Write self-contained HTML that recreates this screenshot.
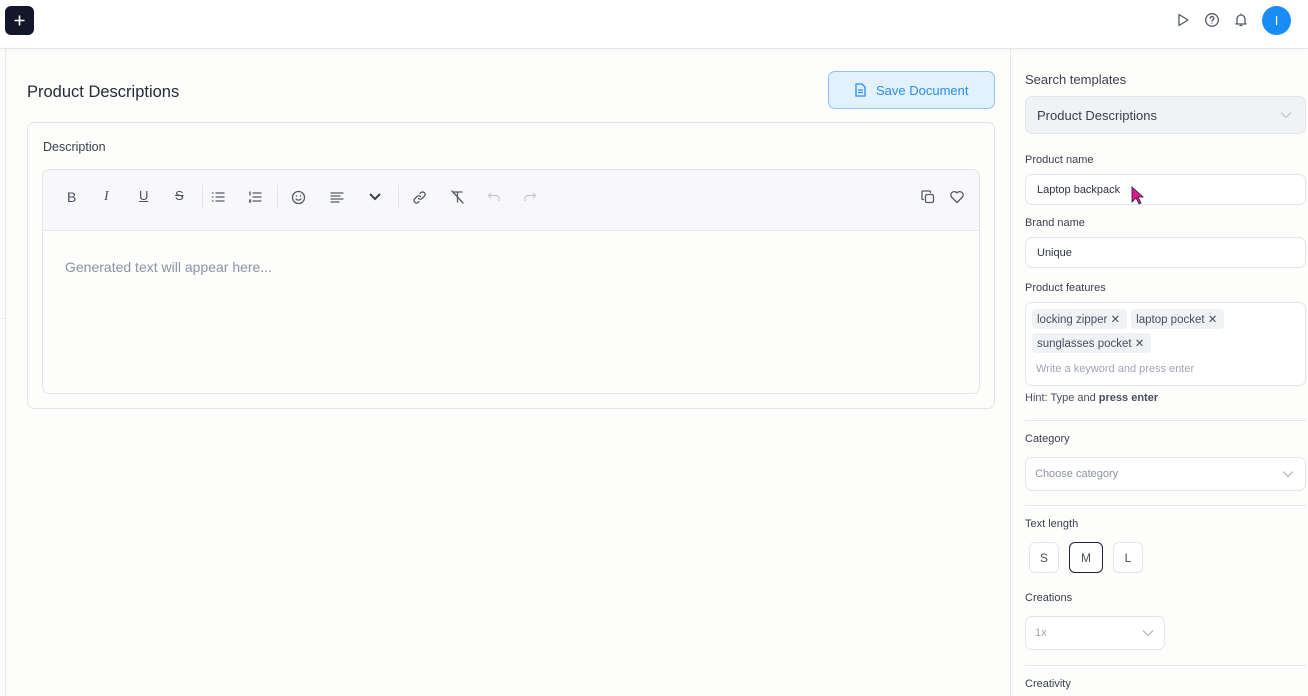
<!DOCTYPE html>
<html><head><meta charset="utf-8"><style>
*{box-sizing:border-box;margin:0;padding:0}
body{width:1308px;height:696px;overflow:hidden;background:#fdfdfc;font-family:"Liberation Sans",sans-serif;color:#2d3240;position:relative}
.a{position:absolute}
.lbl{position:absolute;left:1025px;font-size:11px;color:#3a3f4b;margin-top:1px}
.inp{position:absolute;left:1025px;width:281px;border:1px solid #e3e5ec;border-radius:7px;background:#fff;font-size:11px;color:#2d3240;padding-left:11px;display:flex;align-items:center}
.tag{display:inline-block;background:#f1f2f6;border-radius:4px;font-size:11.5px;color:#4a4f5c;padding:3px 7px 3px 5px;margin:0 4px 4px 0}
.hr{position:absolute;left:1025px;width:281px;height:1px;background:#e6e7ee}
.sz{position:absolute;top:542px;width:30px;height:31px;border:1px solid #e3e5ec;border-radius:6px;font-size:12px;color:#4a4f5c;display:flex;align-items:center;justify-content:center;background:#fff}
svg{position:absolute}
.ic{stroke:#555a66;fill:none;stroke-width:1.3;stroke-linecap:round;stroke-linejoin:round}
</style></head><body>
<div class="a" style="left:0;top:0;width:1308px;height:49px;background:#fff;border-bottom:1px solid #e6e7ee;box-shadow:0 1px 2px rgba(0,0,0,.04)"></div>
<div class="a" style="left:5px;top:6px;width:29px;height:29px;background:#141629;border-radius:6px"></div>
<svg style="left:13px;top:14px" width="13" height="13" viewBox="0 0 13 13"><path d="M6.5 1.5v10M1.5 6.5h10" stroke="#fff" stroke-width="1.6"/></svg>
<svg style="left:1175px;top:12px" width="16" height="16" viewBox="0 0 16 16"><path class="ic" d="M4 2.5v11l9-5.5z"/></svg>
<svg style="left:1204px;top:12px" width="16" height="16" viewBox="0 0 16 16"><circle class="ic" cx="8" cy="8" r="6.3"/><path class="ic" d="M6.2 6.3a1.8 1.8 0 1 1 2.4 1.7c-.5.2-.6.6-.6 1.2"/><circle cx="8" cy="11.3" r=".6" fill="#555a66"/></svg>
<svg style="left:1233px;top:12px" width="16" height="16" viewBox="0 0 16 16"><path class="ic" d="M4 11V7a4 4 0 0 1 8 0v4l1 1H3zM7 13.5h2M8 2v1"/></svg>
<div class="a" style="left:1262px;top:6px;width:29px;height:29px;border-radius:50%;background:#1a8cf5;color:#fff;font-size:13px;line-height:29px;text-align:center">I</div>
<div class="a" style="left:5px;top:49px;width:1px;height:647px;background:#e8e9f0"></div>
<div class="a" style="left:0;top:318px;width:5px;height:1px;background:#e8e9f0"></div>
<div class="a" style="left:1010px;top:49px;width:1px;height:647px;background:#e6e7ee"></div>
<div class="a" style="left:27px;top:83px;font-size:16.5px;color:#262a36">Product Descriptions</div>
<div class="a" style="left:828px;top:71px;width:167px;height:38px;border:1px solid #8cc6f8;border-radius:7px;background:#e3f1fd;color:#2a8ef0;font-size:13px;display:flex;align-items:center;padding-left:47px">Save Document</div>
<svg style="left:854px;top:83px" width="13" height="14" viewBox="0 0 13 14"><path d="M2 1h6l3 3v9H2z M4 7h5M4 9.5h5" stroke="#2a8ef0" stroke-width="1.3" fill="none"/></svg>
<div class="a" style="left:27px;top:122px;width:968px;height:287px;border:1px solid #e3e5ec;border-radius:7px;background:#fdfdfc"></div>
<div class="a" style="left:43px;top:140px;font-size:12.5px;color:#3a3f4b">Description</div>
<div class="a" style="left:42px;top:169px;width:938px;height:225px;border:1px solid #e3e5ec;border-radius:7px;background:#fdfdfc;overflow:hidden">
<div style="height:61px;background:#f8f8fa;border-bottom:1px solid #e6e7ee"></div>
</div>
<div class="a" style="left:67px;top:189px;font-size:14px;color:#4a4f5c">B</div>
<div class="a" style="left:104px;top:189px;font-size:14px;color:#4a4f5c;font-style:italic;font-family:'Liberation Serif',serif">I</div>
<div class="a" style="left:139px;top:188px;font-size:13px;color:#4a4f5c;text-decoration:underline">U</div>
<div class="a" style="left:175px;top:188px;font-size:13px;color:#4a4f5c;text-decoration:line-through">S</div>
<div class="a" style="left:202px;top:185px;width:1px;height:24px;background:#e3e5ec"></div>
<svg style="left:211px;top:190px" width="14" height="14" viewBox="0 0 14 14"><path class="ic" d="M5 3h8M5 7h8M5 11h8M1.5 3h.5M1.5 7h.5M1.5 11h.5"/></svg>
<svg style="left:248px;top:190px" width="14" height="14" viewBox="0 0 14 14"><path class="ic" d="M5 3h8M5 7h8M5 11h8M2 2v3M1.5 10h1.2l-1.2 2h1.2"/></svg>
<div class="a" style="left:277px;top:185px;width:1px;height:24px;background:#e3e5ec"></div>
<svg style="left:291px;top:190px" width="15" height="15" viewBox="0 0 15 15"><circle class="ic" cx="7.5" cy="7.5" r="6"/><path class="ic" d="M5 9c1.3 1.5 3.7 1.5 5 0"/><circle cx="5.5" cy="6" r=".7" fill="#555a66"/><circle cx="9.5" cy="6" r=".7" fill="#555a66"/></svg>
<svg style="left:330px;top:191px" width="14" height="12" viewBox="0 0 14 12"><path class="ic" d="M1 2h12M1 5h9M1 8h12M1 11h8"/></svg>
<svg style="left:368px;top:192px" width="14" height="10" viewBox="0 0 14 10"><path d="M2 2l5 5 5-5" stroke="#3a3f4b" stroke-width="2" fill="none"/></svg>
<div class="a" style="left:398px;top:185px;width:1px;height:24px;background:#e3e5ec"></div>
<svg style="left:412px;top:190px" width="15" height="15" viewBox="0 0 15 15"><path class="ic" d="M6.5 8.5a2.5 2.5 0 0 0 3.5 0l2.5-2.5a2.5 2.5 0 0 0-3.5-3.5l-1 1M8.5 6.5a2.5 2.5 0 0 0-3.5 0L2.5 9a2.5 2.5 0 0 0 3.5 3.5l1-1"/></svg>
<svg style="left:450px;top:189px" width="15" height="16" viewBox="0 0 15 16"><path class="ic" d="M3 3h9M7.5 3v10M2 2l11 12"/></svg>
<svg style="left:487px;top:190px" width="14" height="14" viewBox="0 0 14 14"><path d="M4 3L1.5 5.5 4 8M1.5 5.5H9a3 3 0 0 1 3 3V11" stroke="#c4c7cf" stroke-width="1.2" fill="none"/></svg>
<svg style="left:523px;top:190px" width="14" height="14" viewBox="0 0 14 14"><path d="M10 3l2.5 2.5L10 8M12.5 5.5H5a3 3 0 0 0-3 3V11" stroke="#c4c7cf" stroke-width="1.2" fill="none"/></svg>
<svg style="left:920px;top:189px" width="16" height="16" viewBox="0 0 16 16"><rect class="ic" x="5.5" y="5.5" width="8" height="8" rx="1.5"/><path class="ic" d="M3.5 10.5h-.5a1 1 0 0 1-1-1V3a1 1 0 0 1 1-1h6.5a1 1 0 0 1 1 1v.5"/></svg>
<svg style="left:949px;top:189px" width="16" height="16" viewBox="0 0 16 16"><path class="ic" d="M8 13.5L2.5 8A3.2 3.2 0 0 1 8 4a3.2 3.2 0 0 1 5.5 4z"/></svg>
<div class="a" style="left:65px;top:259px;font-size:14px;color:#8d93a3">Generated text will appear here...</div>

<div class="lbl" style="top:71px;font-size:13px">Search templates</div>
<div class="inp" style="top:96px;height:38px;background:#f1f2f5;font-size:13px;color:#3a3f4b">Product Descriptions</div>
<svg style="left:1280px;top:111px" width="12" height="8" viewBox="0 0 12 8"><path d="M1 1.5l5 5 5-5" stroke="#c4c7cf" stroke-width="1.3" fill="none"/></svg>
<div class="lbl" style="top:153px">Product name</div>
<div class="inp" style="top:174px;height:31px">Laptop backpack</div>
<svg style="left:1131px;top:186px" width="14" height="20" viewBox="0 0 14 20"><path d="M1 1v15l4-4 3 6 2-1-3-6h5z" fill="#e0159a" stroke="#222" stroke-width=".8"/></svg>
<div class="lbl" style="top:216px">Brand name</div>
<div class="inp" style="top:237px;height:31px">Unique</div>
<div class="lbl" style="top:281px">Product features</div>
<div class="inp" style="top:302px;height:84px;display:block;padding:6px 0 0 6px">
<span class="tag">locking zipper ✕</span><span class="tag">laptop pocket ✕</span><br><span class="tag">sunglasses pocket ✕</span>
<div style="font-size:11px;color:#a0a5b2;padding:6px 0 0 4px">Write a keyword and press enter</div></div>
<div class="lbl" style="top:391px;color:#4a4f5c">Hint: Type and <b>press enter</b></div>
<div class="hr" style="top:420px"></div>
<div class="lbl" style="top:432px">Category</div>
<div class="inp" style="top:457px;height:34px;color:#8d93a3;padding-left:9px">Choose category</div>
<svg style="left:1282px;top:470px" width="12" height="8" viewBox="0 0 12 8"><path d="M1 1.5l5 5 5-5" stroke="#b8bcc6" stroke-width="1.3" fill="none"/></svg>
<div class="hr" style="top:505px"></div>
<div class="lbl" style="top:517px">Text length</div>
<div class="sz" style="left:1029px">S</div>
<div class="sz" style="left:1069px;width:34px;border:1.3px solid #1f2333">M</div>
<div class="sz" style="left:1113px">L</div>
<div class="lbl" style="top:591px">Creations</div>
<div class="inp" style="top:616px;width:140px;height:34px;color:#a0a5b2;padding-left:9px">1x</div>
<svg style="left:1142px;top:629px" width="12" height="8" viewBox="0 0 12 8"><path d="M1 1.5l5 5 5-5" stroke="#b8bcc6" stroke-width="1.3" fill="none"/></svg>
<div class="hr" style="top:665px"></div>
<div class="lbl" style="top:677px">Creativity</div>
</body></html>
